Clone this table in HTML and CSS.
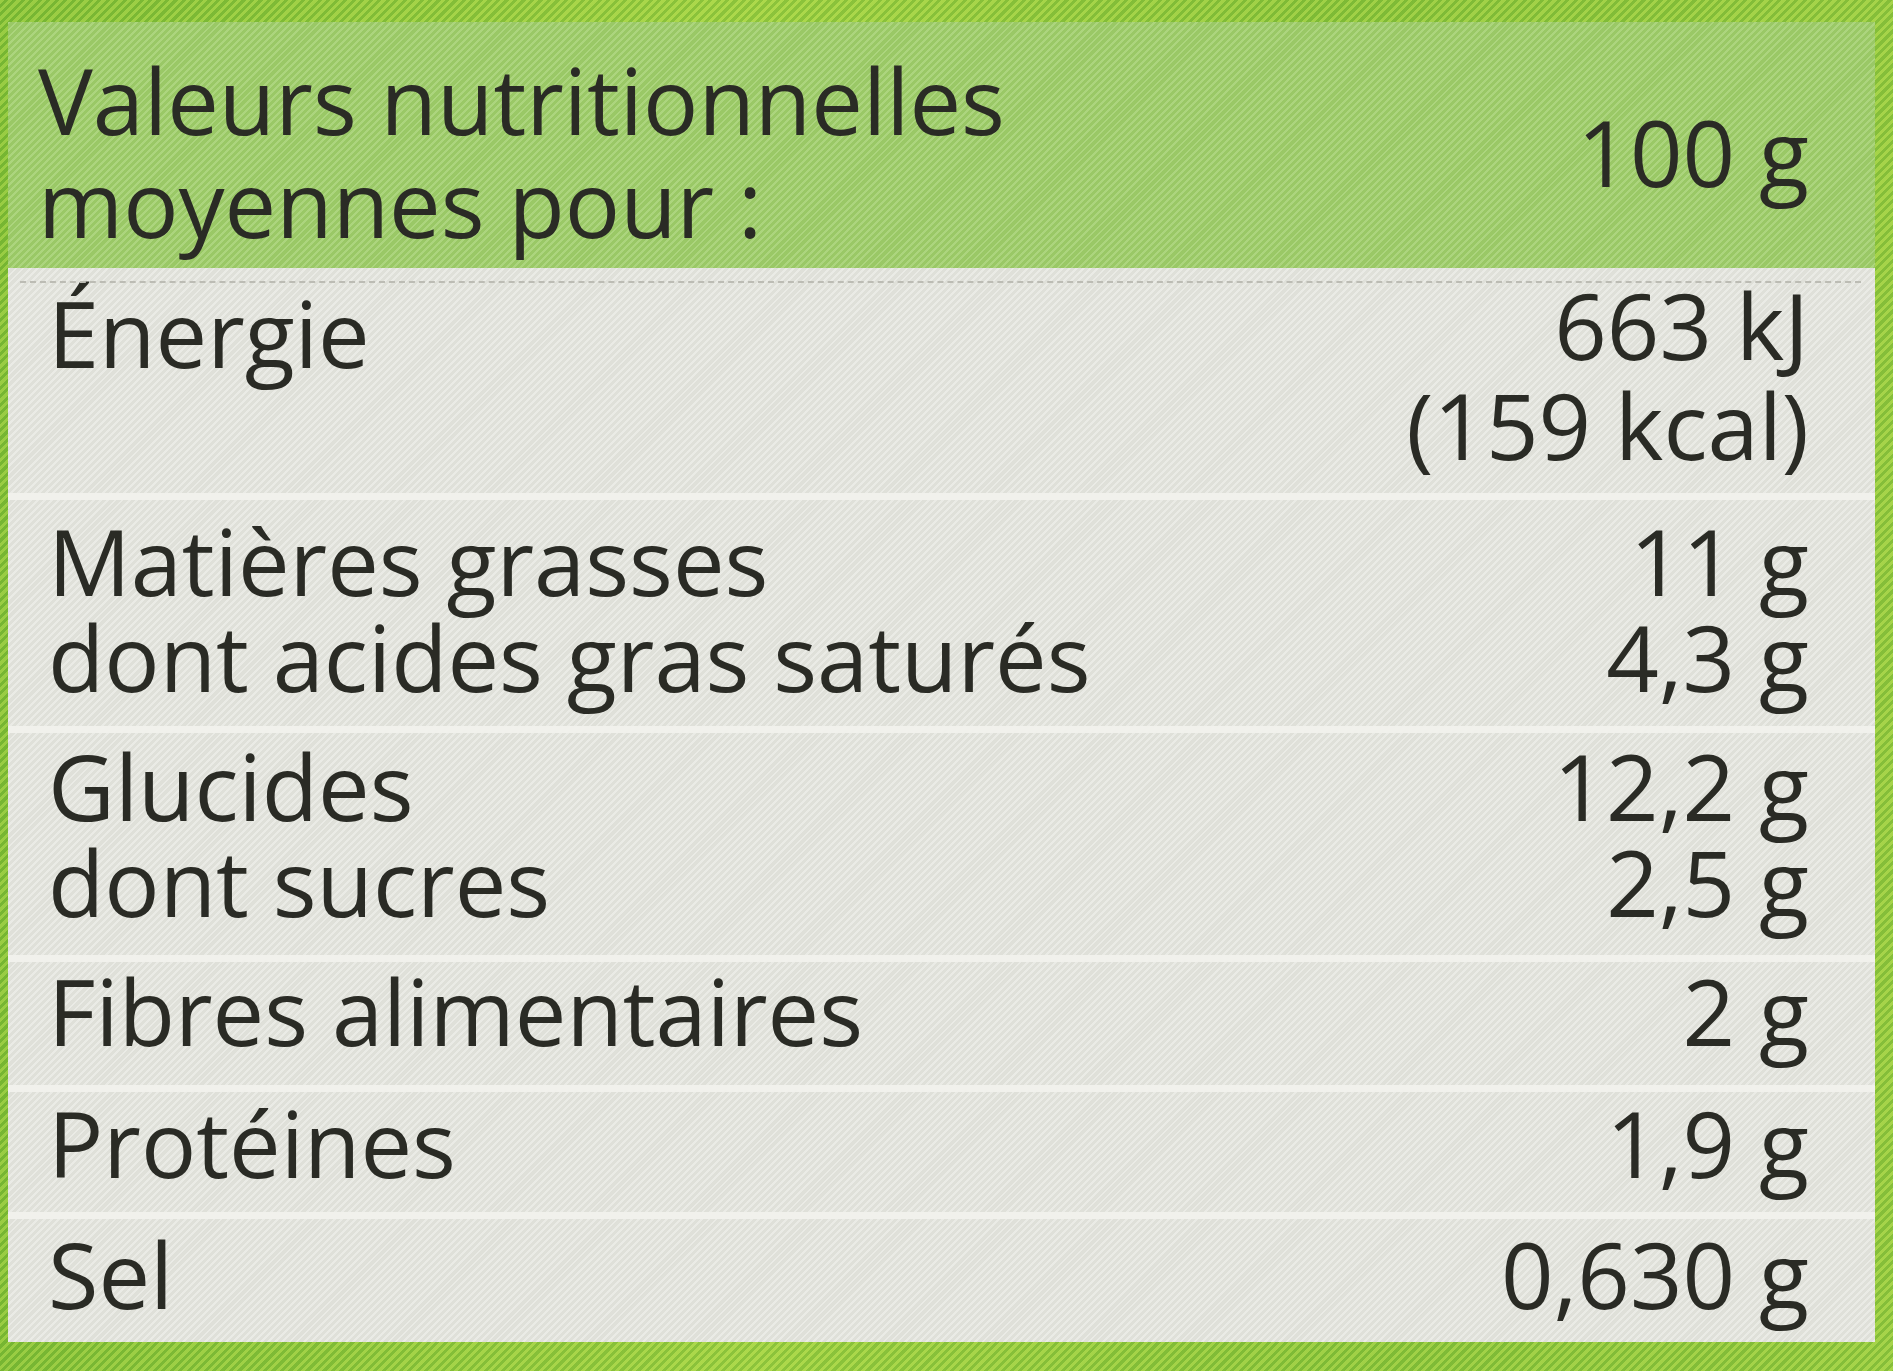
FILE: index.html
```html
<!DOCTYPE html>
<html lang="fr">
<head>
<meta charset="utf-8">
<title>Valeurs nutritionnelles</title>
<link rel="stylesheet" href="styles.css">
</head>
<body>
<div class="label">
  <div class="row head">
    <div class="name">Valeurs nutritionnelles<br>moyennes pour :</div>
    <div class="val mid">100 g</div>
  </div>
  <div class="row energy">
    <div class="name">Énergie</div>
    <div class="val">663 kJ<br>(159 kcal)</div>
  </div>
  <div class="row fats">
    <div class="name">Matières grasses<br>dont acides gras saturés</div>
    <div class="val">11 g<br>4,3 g</div>
  </div>
  <div class="row carbs">
    <div class="name">Glucides<br>dont sucres</div>
    <div class="val">12,2 g<br>2,5 g</div>
  </div>
  <div class="row fibre">
    <div class="name">Fibres alimentaires</div>
    <div class="val">2 g</div>
  </div>
  <div class="row prot">
    <div class="name">Protéines</div>
    <div class="val">1,9 g</div>
  </div>
  <div class="row salt">
    <div class="name">Sel</div>
    <div class="val">0,630 g</div>
  </div>
</div>
</body>
</html>
```
FILE: styles.css
```css
html, body {
  margin: 0;
  padding: 0;
}
body {
  width: 1893px;
  height: 1371px;
  overflow: hidden;
  background-color: #8ac63c;
  background-image:
    repeating-linear-gradient(135deg, rgba(255,255,120,0.2) 0 3px, rgba(0,60,0,0.08) 3px 6px),
    linear-gradient(90deg, #80c036 0%, #98cf40 40%, #88c53a 70%, #90c93e 100%);
  padding: 22px 18px 29px 8px;
  box-sizing: border-box;
  font-family: "Open Sans", "Liberation Sans", Arial, sans-serif;
  color: #2a2b25;
}
.label {
  height: 1320px;
  display: flex;
  flex-direction: column;
  gap: 7px;
  background: #f1f1ec;
}
.row {
  display: grid;
  grid-template-columns: 1fr auto;
  padding: 0 66px 0 40px;
  font-size: 92px;
  line-height: 96px;
  background-color: #e3e4dd;
  background-image: repeating-linear-gradient(135deg, rgba(255,255,255,0.25) 0 2px, rgba(0,0,0,0.02) 2px 5px);
  box-sizing: border-box;
}
.val {
  text-align: right;
}
.head {
  height: 246px;
  margin-bottom: -7px;
  padding-top: 26px;
  line-height: 103px;
  background-color: #a1cf6c;
  background-image: repeating-linear-gradient(135deg, rgba(255,255,255,0.12) 0 2px, rgba(40,90,0,0.06) 2px 5px);
  padding-left: 30px;
}
.head .val.mid {
  align-self: start;
  padding-top: 52px;
}
.energy {
  height: 225px;
  padding-top: 15px;
  line-height: 100px;
  position: relative;
}
.energy .val {
  margin-top: -8px;
}
.energy::before {
  content: "";
  position: absolute;
  left: 12px;
  right: 14px;
  top: 13px;
  border-top: 2px dashed #bcbcb4;
}
.fats {
  height: 226px;
  padding-top: 13px;
}
.carbs {
  height: 222px;
  padding-top: 5px;
}
.fibre {
  height: 123px;
  padding-top: 1px;
}
.prot {
  height: 120px;
  padding-top: 3px;
}
.salt {
  flex: 1;
  padding-top: 7px;
}
```
